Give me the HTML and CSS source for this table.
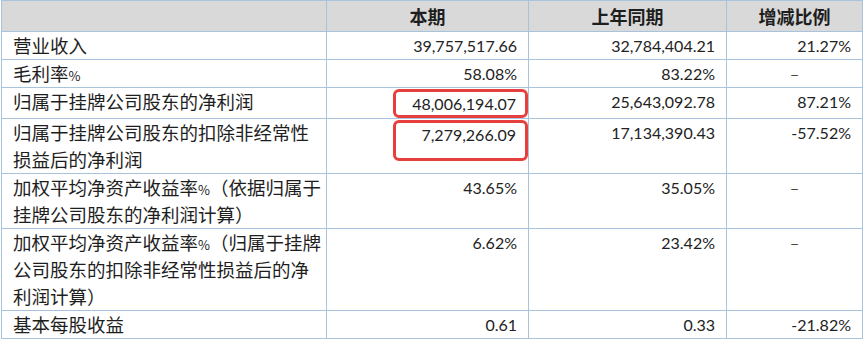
FILE: index.html
```html
<!DOCTYPE html>
<html lang="zh-CN">
<head>
    <meta charset="UTF-8">
    <meta name="viewport" content="width=device-width, initial-scale=1.0">
    <title>主要财务数据</title>
    <link rel="stylesheet" href="styles.css">
</head>
<body>
    <table class="fin-table">
        <colgroup>
            <col class="col-label">
            <col class="col-now">
            <col class="col-last">
            <col class="col-rate">
        </colgroup>
        <thead>
            <tr>
                <th></th>
                <th>本期</th>
                <th>上年同期</th>
                <th>增减比例</th>
            </tr>
        </thead>
        <tbody>
            <tr>
                <td class="label">营业收入</td>
                <td class="num">39,757,517.66</td>
                <td class="num">32,784,404.21</td>
                <td class="num">21.27%</td>
            </tr>
            <tr>
                <td class="label">毛利率<span class="pct">%</span></td>
                <td class="num">58.08%</td>
                <td class="num">83.22%</td>
                <td class="dash">–</td>
            </tr>
            <tr>
                <td class="label">归属于挂牌公司股东的净利润</td>
                <td class="num mark-cell"><span class="mark">48,006,194.07</span></td>
                <td class="num">25,643,092.78</td>
                <td class="num">87.21%</td>
            </tr>
            <tr>
                <td class="label">归属于挂牌公司股东的扣除非经常性<br>损益后的净利润</td>
                <td class="num mark-cell"><span class="mark mark-tall">7,279,266.09</span></td>
                <td class="num">17,134,390.43</td>
                <td class="num">-57.52%</td>
            </tr>
            <tr>
                <td class="label">加权平均净资产收益率<span class="pct">%</span>（依据归属于<br>挂牌公司股东的净利润计算）</td>
                <td class="num">43.65%</td>
                <td class="num">35.05%</td>
                <td class="dash">–</td>
            </tr>
            <tr>
                <td class="label">加权平均净资产收益率<span class="pct">%</span>（归属于挂牌<br>公司股东的扣除非经常性损益后的净<br>利润计算）</td>
                <td class="num">6.62%</td>
                <td class="num">23.42%</td>
                <td class="dash">–</td>
            </tr>
            <tr>
                <td class="label">基本每股收益</td>
                <td class="num">0.61</td>
                <td class="num">0.33</td>
                <td class="num">-21.82%</td>
            </tr>
        </tbody>
    </table>
</body>
</html>
```
FILE: styles.css
```css
body {
    margin: 0;
    padding: 0 0 0 1px;
    background: #fff;
    color: #1e1e1e;
    font-family: "Noto Sans CJK SC", "Noto Sans", sans-serif;
}
.fin-table {
    border-collapse: collapse;
    table-layout: fixed;
    width: 862px;
    font-size: 18px;
}
.col-label {
    width: 325px;
}
.col-now {
    width: 202px;
}
.col-last {
    width: 198px;
}
.col-rate {
    width: 136px;
}
.fin-table th,
.fin-table td {
    border: 1px solid #a9c3dd;
    padding: 0;
    line-height: 27px;
    vertical-align: top;
}
.fin-table th {
    background-color: #d9d9d9;
    height: 30px;
    font-weight: bold;
    text-align: center;
    vertical-align: middle;
    line-height: 30px;
}
.fin-table td.label {
    padding-left: 11px;
    font-size: 18.5px;
    white-space: nowrap;
}
.pct {
    font-size: 13px;
    line-height: 1;
}
.fin-table td.num {
    text-align: right;
    padding-right: 11px;
    font-family: Lato, "Liberation Sans", sans-serif;
    font-size: 16px;
    color: #222;
}
.fin-table td.dash {
    text-align: center;
    color: #444;
    font-size: 15px;
}
.fin-table td.mark-cell {
    padding-right: 0;
}
.mark {
    display: inline-block;
    border: 3px solid #e5403d;
    border-radius: 6px;
    padding: 0 9px 0 8px;
    margin: 1px 0 0;
    line-height: 23px;
    width: 112px;
    text-align: right;
}
.mark-tall {
    height: 35px;
}
```
